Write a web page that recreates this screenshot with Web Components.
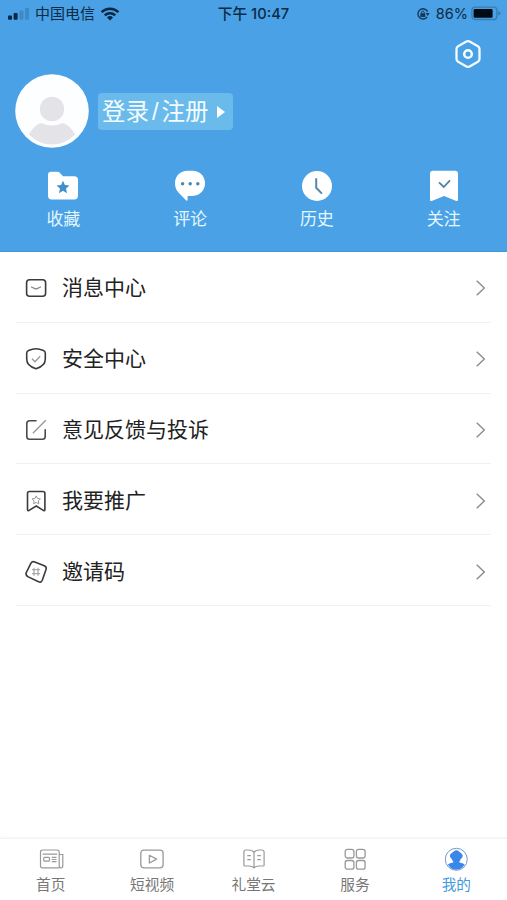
<!DOCTYPE html>
<html lang="zh-CN">
<head>
<meta charset="utf-8">
<meta name="viewport" content="width=device-width, initial-scale=1">
<title>我的</title>
<style>
  html, body { height: 100%; }
  body { margin: 0; overflow: hidden; background: #fff; font-family: "Liberation Sans", "Noto Sans CJK SC", sans-serif; }
</style>
</head>
<body>
<profile-page></profile-page>

<script>
const ICONS = {
  signal: [22, 14, '<g fill="#082844"><rect x="0" y="8.5" width="4" height="4.2" rx="1"/><rect x="5.6" y="6" width="4" height="6.7" rx="1"/></g><g fill="#3d8ac6"><rect x="11.4" y="3.4" width="4" height="9.3" rx="1"/><rect x="17" y="1" width="4" height="11.7" rx="1"/></g>'],
  wifi: [20, 15, '<g fill="none" stroke="#082844" stroke-width="2.5"><path d="M1.6 6.1a12 12 0 0 1 16.8 0"/><path d="M4.8 9.4a7.5 7.5 0 0 1 10.4 0"/></g><path fill="#082844" d="M7 11.4a4.4 4.4 0 0 1 6 0L10 14.4z"/>'],
  lock: [14, 14, '<path fill="none" stroke="#14395a" stroke-width="1.4" d="M11.2 9.9A5.1 5.1 0 1 1 11.6 4.600"/><path fill="#14395a" d="M9.600 6.100h4.100l-1.900 2.800z"/><rect x="4.300" y="6.200" width="5" height="3.800" rx=".6" fill="#14395a"/><path d="M5.400 6.700V5.500a1.400 1.400 0 0 1 2.800 0v1.200" fill="none" stroke="#14395a"/>'],
  battery: [31, 15, '<rect x=".9" y="1.1" width="25" height="12.4" rx="3" fill="none" stroke="#397caf" stroke-width="1.3"/><rect x="2.6" y="3" width="19" height="8.8" rx="1.4" fill="#020b14"/><path fill="#397caf" d="M27.2 5.2q2.4.5 2.4 2.1t-2.4 2.2z"/>'],
  setting: [28, 30, '<path d="M12.4 2.6q1.6-.9 3.2 0l8.3 4.7q1.6.9 1.6 2.7v10q0 1.8-1.6 2.7l-8.3 4.7q-1.6.9-3.2 0l-8.3-4.7q-1.6-.9-1.6-2.7V10q0-1.8 1.6-2.7z" fill="none" stroke="#f4fdff" stroke-width="2.3"/><circle cx="14" cy="15" r="3.8" fill="none" stroke="#f4fdff" stroke-width="2.5"/>'],
  avatar: [74, 74, '<circle cx="37" cy="37" r="36.8" fill="#fdfeff"/><circle cx="37" cy="35" r="12.2" fill="#e4e4e8"/><path fill="#e4e4e8" d="M13.8 60.5C17.2 54.9 20.6 51 26.2 49q10.800 5 21.600 0c5.600 2 9 5.900 12.400 11.500Q50 70.500 37 70.500T13.800 60.500z"/>'],
  folder: [32, 32, '<path fill="#fff" d="M4 1.8h6.5q1.5 0 2.5 1.1L16 6.2h11.2q3.8 0 3.8 3.7v15.9q0 3.6-3.8 3.6H4.6Q1 29.4 1 25.8V5q0-3.2 3-3.2z"/><path fill="#3f8fcb" d="m16 10.8 1.9 4.2 4.6.5-3.5 3 1 4.7-4-2.4-4 2.4 1-4.7-3.5-3 4.6-.5z"/>'],
  comment: [32, 32, '<path fill="#fff" d="M13.5.8h5C25.6.8 31 6 31 13.3s-5.4 12.6-12.5 12.6h-4.9v4.2q-.5 1.2-1.6.1L4.9 23Q1 19.2 1 13.3C1 6 6.4.8 13.5.8z"/><g fill="#4b86ae"><circle cx="8.6" cy="13.7" r="1.7"/><circle cx="16.2" cy="13.7" r="1.7"/><circle cx="23.8" cy="13.7" r="1.7"/></g>'],
  clock: [32, 32, '<circle cx="16" cy="16" r="15" fill="#fff"/><path d="M15.2 8.2v9.6l5.7 5.8" fill="none" stroke="#5688aa" stroke-width="2"/>'],
  bookmark: [32, 32, '<path fill="#fff" d="M5 .8h22q3 0 3 3v25.7q0 2.3-2.3 1.2L16.1 26 4.3 30.7Q2 31.8 2 29.5V3.8q0-3 3-3z"/><path d="m11 12.3 4.8 4.7 6.2-6.7" fill="none" stroke="#4a83ad" stroke-width="1.8"/>'],
  message: [24, 24, '<rect x="2.6" y="3.7" width="19" height="16.6" rx="3" fill="none" stroke="#3b3b3b" stroke-width="1.6"/><path d="m7 10.7 3.300 1.700q1.700.9 3.400 0l3.300-1.700" fill="none" stroke="#888" stroke-width="1.2"/>'],
  shield: [24, 24, '<path d="M12 1.700q3.300 0 7.500 1.800 1.800.8 1.800 2.800V12c0 4.800-3.300 8-9.300 9.800-6-1.800-9.300-5-9.300-9.800V6.300q0-2 1.800-2.800Q8.700 1.700 12 1.700z" fill="none" stroke="#3b3b3b" stroke-width="1.6"/><path d="m8 11.700 3 3 5.200-5.500" fill="none" stroke="#999" stroke-width="1.3"/>'],
  edit: [24, 24, '<path d="M12 2.7H5.6q-2.8 0-2.8 2.8v13q0 2.8 2.8 2.8h12.8q2.8 0 2.8-2.8v-6.7" fill="none" stroke="#4b4b4b" stroke-width="1.6" stroke-linecap="round"/><path d="M8.9 15.3 21.8 2.3" stroke="#999" stroke-width="1.4"/>'],
  promote: [24, 24, '<path d="M5.5 2.500h13.400q2 0 2 2v16q0 1.900-1.600.8L12.300 17l-7.200 4.300q-1.600 1.100-1.600-.8v-16q0-2 2-2z" fill="none" stroke="#3b3b3b" stroke-width="1.6"/><path d="m12.200 6.900 1.300 2.600 2.900.4-2.100 2 .5 2.900-2.600-1.400-2.600 1.400.5-2.900-2.100-2 2.900-.4z" fill="none" stroke="#999"/>'],
  invite: [24, 24, '<path d="M10.800 1.900 20.300 5.700Q22.700 6.800 22.100 9.200L18.300 20.200Q17.200 22.900 14.600 21.800L4.300 16.900Q1.500 15.500 2.100 12.900L6.700 3.600Q8.100 1 10.800 1.900z" fill="none" stroke="#3b3b3b" stroke-width="1.6"/><path d="M10 7.700v8m4-8v8m-6-6h8m-8 4h8" stroke="#aaa" stroke-width="1.3"/>'],
  chevron: [12, 18, '<path d="m1.700 1.700 7.600 7.300-7.600 7.300" fill="none" stroke="#8b8b8b" stroke-width="1.4"/>'],
  news: [26, 24, '<g fill="none" stroke="#999" stroke-width="1.2"><path d="M21.200 20.800H4.600q-2.100 0-2.100-2.100V5.100Q2.500 3 4.600 3h14.500q2.100 0 2.100 2.100v13.600q0 2.100 1.800 2.100t1.800-2.100V7.500h-3.600"/><rect x="5.700" y="10.300" width="5.800" height="3.900" rx="1"/><path d="M4.700 7.200h14.500M13.800 10.300h4.700m-4.700 2.200h4.700m-4.700 2.200h4.700"/></g>'],
  video: [26, 24, '<rect x="1.8" y="3.2" width="22.3" height="17.6" rx="3" fill="none" stroke="#999" stroke-width="1.3"/><path d="m10.400 8.300 7.200 3.800-7.200 3.900z" fill="none" stroke="#999" stroke-width="1.3" stroke-linejoin="round"/>'],
  book: [26, 24, '<path d="M13 5.400Q11.600 3 7.500 3H4.800Q2.900 3 2.900 5v13.200q0 .8.900.8h4.300q3.300 0 4.900 1.800 1.600-1.800 4.900-1.800h4.300q.9 0 .9-.8V5q0-1.900-1.900-2h-2.700Q14.400 3 13 5.400zm0 0v15.400M6.300 8.600h3.500m-3.500 4h3.500m6.500-4h3.500m-3.500 4h3.500" fill="none" stroke="#999" stroke-width="1.2"/>'],
  grid: [26, 24, '<g fill="none" stroke="#999" stroke-width="1.3"><rect x="3.200" y="2.300" width="8.700" height="8.700" rx="2.200"/><rect x="14.400" y="2.300" width="8.700" height="8.700" rx="2.200"/><rect x="3.200" y="13.500" width="8.700" height="8.700" rx="2.200"/><rect x="14.400" y="13.500" width="8.700" height="8.700" rx="2.200"/></g>'],
  mine: [26, 24, '<circle cx="13.300" cy="12.300" r="11" fill="#fff" stroke="#7199cb" stroke-width="1"/><path fill="#3a86e9" d="M10.700 4.500q2.700-2.400 5.400 0l2.900 2.500q1.500 1.700.1 3.700l-1.400 1.200q-.4 2-1.700 3 1 .7 3.500 1.400l2.200 1.300q-3.200 5.200-8.400 5.200T4.900 17.600l2.200-1.300q2.500-.7 3.500-1.400-1.300-1-1.700-3l-1.400-1.200q-1.400-2 .1-3.700z"/>']
};

class AppIcon extends HTMLElement {
  constructor() {
    super();
    this.attachShadow({ mode: 'open' });
  }

  connectedCallback() {
    const [w, h, body] = ICONS[this.getAttribute('name')];
    this.shadowRoot.innerHTML = `
      <style>
        :host { display: block; flex: none; }
        svg { display: block; }
      </style>
      <svg width="${w}" height="${h}" viewBox="0 0 ${w} ${h}">${body}</svg>
    `;
  }
}

class StatusBar extends HTMLElement {
  constructor() {
    super();
    this.attachShadow({ mode: 'open' });
    this.shadowRoot.innerHTML = `
      <style>
        :host { display: grid; grid-template-columns: 1fr auto 1fr; align-items: center; height: 27px; padding: 0 8px; color: #0b2b46; font: 15px/26px Inter, "Noto Sans CJK SC", sans-serif; }
        div { display: flex; align-items: center; }
        .carrier { margin: 0 5px 0 5px; }
        .time { font-weight: 500; font-size: 14.7px; }
        .right { justify-content: flex-end; margin-right: -3px; }
        .percent { margin: 0 3px 0 6px; font-size: 14.5px; }
      </style>
      <div><app-icon name="signal"></app-icon><span class="carrier">中国电信</span><app-icon name="wifi"></app-icon></div>
      <span class="time">下午 10:47</span>
      <div class="right"><app-icon name="lock"></app-icon><span class="percent">86%</span><app-icon name="battery"></app-icon></div>
    `;
  }
}

class QuickLink extends HTMLElement {
  constructor() {
    super();
    this.attachShadow({ mode: 'open' });
  }

  connectedCallback() {
    this.shadowRoot.innerHTML = `
      <style>
        :host { display: flex; flex: 1; flex-direction: column; align-items: center; gap: 6px; color: #e3f8ff; font-size: 17px; line-height: 24px; }
      </style>
      <app-icon name="${this.getAttribute('icon')}"></app-icon>
      <span><slot></slot></span>
    `;
  }
}

class ProfileHeader extends HTMLElement {
  constructor() {
    super();
    this.attachShadow({ mode: 'open' });
    this.shadowRoot.innerHTML = `
      <style>
        :host { display: block; height: 252px; background: #4aa1e5; box-sizing: border-box; border-bottom: 1px solid #4297d6; }
        .tools { display: flex; justify-content: flex-end; height: 47px; padding: 12px 25px 0 0; box-sizing: border-box; }
        .user { display: flex; align-items: center; gap: 9px; padding-left: 15px; }
        .login { display: flex; align-items: center; justify-content: space-between; width: 135px; height: 37px; padding: 2px 8px 0 4px; box-sizing: border-box; border-radius: 4px; background: #6abbec; color: #f3fdff; font-size: 23.5px; line-height: 35px; white-space: nowrap; }
        .slash { margin: 0 3px; }
        .arrow { margin-bottom: 1px; border: solid transparent; border-width: 6px 0 6px 8px; border-left-color: #fff; }
        .links { display: flex; padding-top: 22px; }
      </style>
      <status-bar></status-bar>
      <div class="tools"><app-icon name="setting"></app-icon></div>
      <div class="user">
        <app-icon name="avatar"></app-icon>
        <div class="login"><span>登录<span class="slash">/</span>注册</span><i class="arrow"></i></div>
      </div>
      <div class="links">
        <quick-link icon="folder">收藏</quick-link>
        <quick-link icon="comment">评论</quick-link>
        <quick-link icon="clock">历史</quick-link>
        <quick-link icon="bookmark">关注</quick-link>
      </div>
    `;
  }
}

class MenuItem extends HTMLElement {
  constructor() {
    super();
    this.attachShadow({ mode: 'open' });
  }

  connectedCallback() {
    this.shadowRoot.innerHTML = `
      <style>
        :host { display: flex; align-items: center; height: 70.8px; margin: 0 16px; padding: 3px 4px 0 8px; box-sizing: border-box; border-bottom: 1px solid #f1f1f1; color: #222; font-size: 21px; line-height: 30px; }
        .label { flex: 1; margin-left: 14px; }
      </style>
      <app-icon name="${this.getAttribute('icon')}"></app-icon>
      <span class="label"><slot></slot></span>
      <app-icon name="chevron"></app-icon>
    `;
  }
}

class TabItem extends HTMLElement {
  constructor() {
    super();
    this.attachShadow({ mode: 'open' });
  }

  connectedCallback() {
    this.shadowRoot.innerHTML = `
      <style>
        :host { display: flex; flex: 1; flex-direction: column; align-items: center; gap: 4px; color: #777; font-size: 14.7px; line-height: 20px; }
        :host([active]) { color: #449be2; }
      </style>
      <app-icon name="${this.getAttribute('icon')}"></app-icon>
      <span><slot></slot></span>
    `;
  }
}

class TabBar extends HTMLElement {
  constructor() {
    super();
    this.attachShadow({ mode: 'open' });
    this.shadowRoot.innerHTML = `
      <style>
        :host { display: flex; height: 62px; padding-top: 8px; box-sizing: border-box; border-top: 1px solid #f2f2f2; box-shadow: 0 -1px 2px #f7f7f7; background: #fff; }
      </style>
      <slot></slot>
    `;
  }
}

class ProfilePage extends HTMLElement {
  constructor() {
    super();
    this.attachShadow({ mode: 'open' });
    this.shadowRoot.innerHTML = `
      <style>
        :host { display: flex; flex-direction: column; height: 100%; }
        main { flex: 1; }
      </style>
      <profile-header></profile-header>
      <main>
        <menu-item icon="message">消息中心</menu-item>
        <menu-item icon="shield">安全中心</menu-item>
        <menu-item icon="edit">意见反馈与投诉</menu-item>
        <menu-item icon="promote">我要推广</menu-item>
        <menu-item icon="invite">邀请码</menu-item>
      </main>
      <tab-bar>
        <tab-item icon="news">首页</tab-item>
        <tab-item icon="video">短视频</tab-item>
        <tab-item icon="book">礼堂云</tab-item>
        <tab-item icon="grid">服务</tab-item>
        <tab-item icon="mine" active>我的</tab-item>
      </tab-bar>
    `;
  }
}

customElements.define('app-icon', AppIcon);
customElements.define('status-bar', StatusBar);
customElements.define('quick-link', QuickLink);
customElements.define('profile-header', ProfileHeader);
customElements.define('menu-item', MenuItem);
customElements.define('tab-item', TabItem);
customElements.define('tab-bar', TabBar);
customElements.define('profile-page', ProfilePage);
</script>
</body>
</html>
